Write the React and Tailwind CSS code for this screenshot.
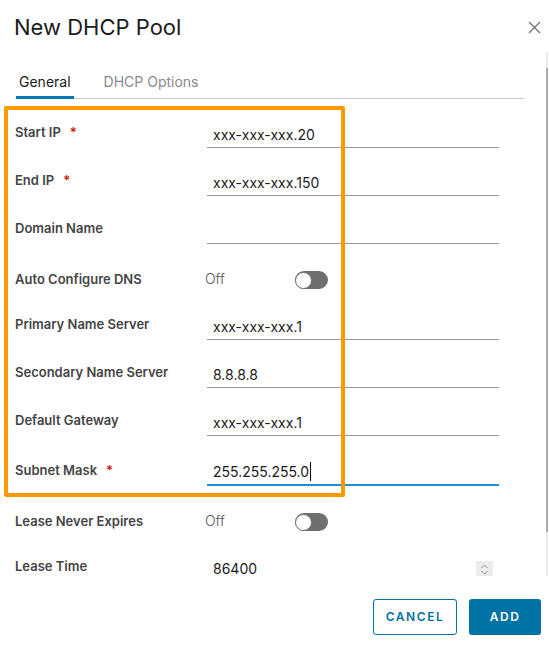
import { useState } from "react";

const font = { fontFamily: "Inter, 'Noto Sans', sans-serif" };

const Label = ({ text, required, className = "pt-[7px]" }) => (
  <div className={`w-[192px] shrink-0 ${className} text-[13px] leading-[20px] font-semibold text-[#454545]`}>
    {text}
    {required && <span className="ml-[9px] text-[#c92100]">*</span>}
  </div>
);

const InputRow = ({ label, value, required, focused, tall }) => (
  <div className={`flex ${tall ? "h-[50px]" : "h-12"}`}>
    <Label text={label} required={required} />
    <div
      className={`mt-[6px] w-[292px] h-[27px] pl-[6px] flex items-center text-[14px] text-[#1b1b1b] ${
        focused ? "border-b-2 border-[#1a8fd0]" : "border-b border-[#9a9a9a]"
      }`}
    >
      {value}
      {focused && <span className="ml-px w-px h-[19px] bg-black" />}
    </div>
  </div>
);

const ToggleRow = ({ label }) => {
  const [on, setOn] = useState(false);
  return (
    <div className="flex h-12">
      <Label text={label} className="pt-[10px]" />
      <div className="flex items-start pt-[10px] -ml-[2px]">
        <span className="w-[90px] text-[14px] leading-[20px] font-light text-[#565656]">Off</span>
        <button
          onClick={() => setOn(!on)}
          className="mt-[2px] w-[33px] h-[18px] rounded-full bg-[#6f6f6f] flex items-center p-0"
        >
          <span className="w-[17px] h-[17px] rounded-full bg-white border-[1.5px] border-[#6f6f6f]" />
        </button>
      </div>
    </div>
  );
};

export default function App() {
  return (
    <div className="relative w-[549px] h-[647px] bg-white overflow-hidden" style={font}>
      {/* header */}
      <div className="flex justify-between h-[52px] pl-[14px] pr-[8px] pt-[13px]">
        <h1 className="text-[22px] leading-[28px] font-normal text-[#1b1b1b]">New DHCP Pool</h1>
        <svg width="13" height="13" viewBox="0 0 13 13" className="mt-[8px]">
          <path d="M1 1 L12 12 M12 1 L1 12" stroke="#737373" strokeWidth="1.3" />
        </svg>
      </div>

      {/* scroll area */}
      <div className="flex h-[524px]">
        <div className="flex-1 overflow-hidden">
          <div className="pt-[20px] ml-[15px] w-[509px] flex gap-[30px] border-b border-[#cccccc]">
            <div className="ml-px px-[3px] pb-[3px] border-b-[3px] border-[#0079b8] -mb-px text-[14px] leading-[20px] text-[#1b1b1b]">
              General
            </div>
            <div className="pb-[6px] text-[14px] leading-[20px] text-[#8a8a8a]">DHCP Options</div>
          </div>

          <div className="mt-[16px] pl-[15px] flex flex-col">
            <InputRow label="Start IP" value="xxx-xxx-xxx.20" required />
            <InputRow label="End IP" value="xxx-xxx-xxx.150" required />
            <InputRow label="Domain Name" value="" />
            <ToggleRow label="Auto Configure DNS" />
            <InputRow label="Primary Name Server" value="xxx-xxx-xxx.1" />
            <InputRow label="Secondary Name Server" value="8.8.8.8" />
            <InputRow label="Default Gateway" value="xxx-xxx-xxx.1" tall />
            <InputRow label="Subnet Mask" value="255.255.255.0" required focused />
            <ToggleRow label="Lease Never Expires" />
            <div className="flex h-12">
              <Label text="Lease Time" />
              <div className="mt-[6px] w-[292px] h-[27px] pl-[6px] pr-[6px] flex items-center justify-between text-[14px] text-[#1b1b1b] border-b border-[#9a9a9a]">
                86400
                <span className="w-[17px] h-[17px] mt-[3px] bg-[#ececec] flex items-center justify-center">
                  <svg width="9" height="13" viewBox="0 0 9 13">
                    <path d="M1.5 5 L4.5 2 L7.5 5 M1.5 8 L4.5 11 L7.5 8" stroke="#8f8f8f" strokeWidth="1" fill="none" />
                  </svg>
                </span>
              </div>
            </div>
          </div>
        </div>
        {/* scrollbar */}
        <div className="w-[2px] mr-px bg-[#ececec] flex flex-col">
          <div className="mt-[16px] h-[464px] bg-[#a9a9a9]" />
        </div>
      </div>

      {/* footer */}
      <div className="flex justify-end gap-[12px] pr-[8px] pt-[23px]">
        <button className="w-[84px] h-[36px] rounded-[3px] border border-[#0072a3] text-[#0072a3] text-[12px] font-semibold tracking-[0.13em]">
          CANCEL
        </button>
        <button className="w-[72px] h-[36px] rounded-[3px] bg-[#0072a3] text-white text-[12px] font-semibold tracking-[0.13em]">
          ADD
        </button>
      </div>

      {/* annotation highlight */}
      <div className="absolute left-[4px] top-[106px] w-[341px] h-[391px] border-4 border-[#ff9900] rounded-[2px] pointer-events-none" />
    </div>
  );
}
